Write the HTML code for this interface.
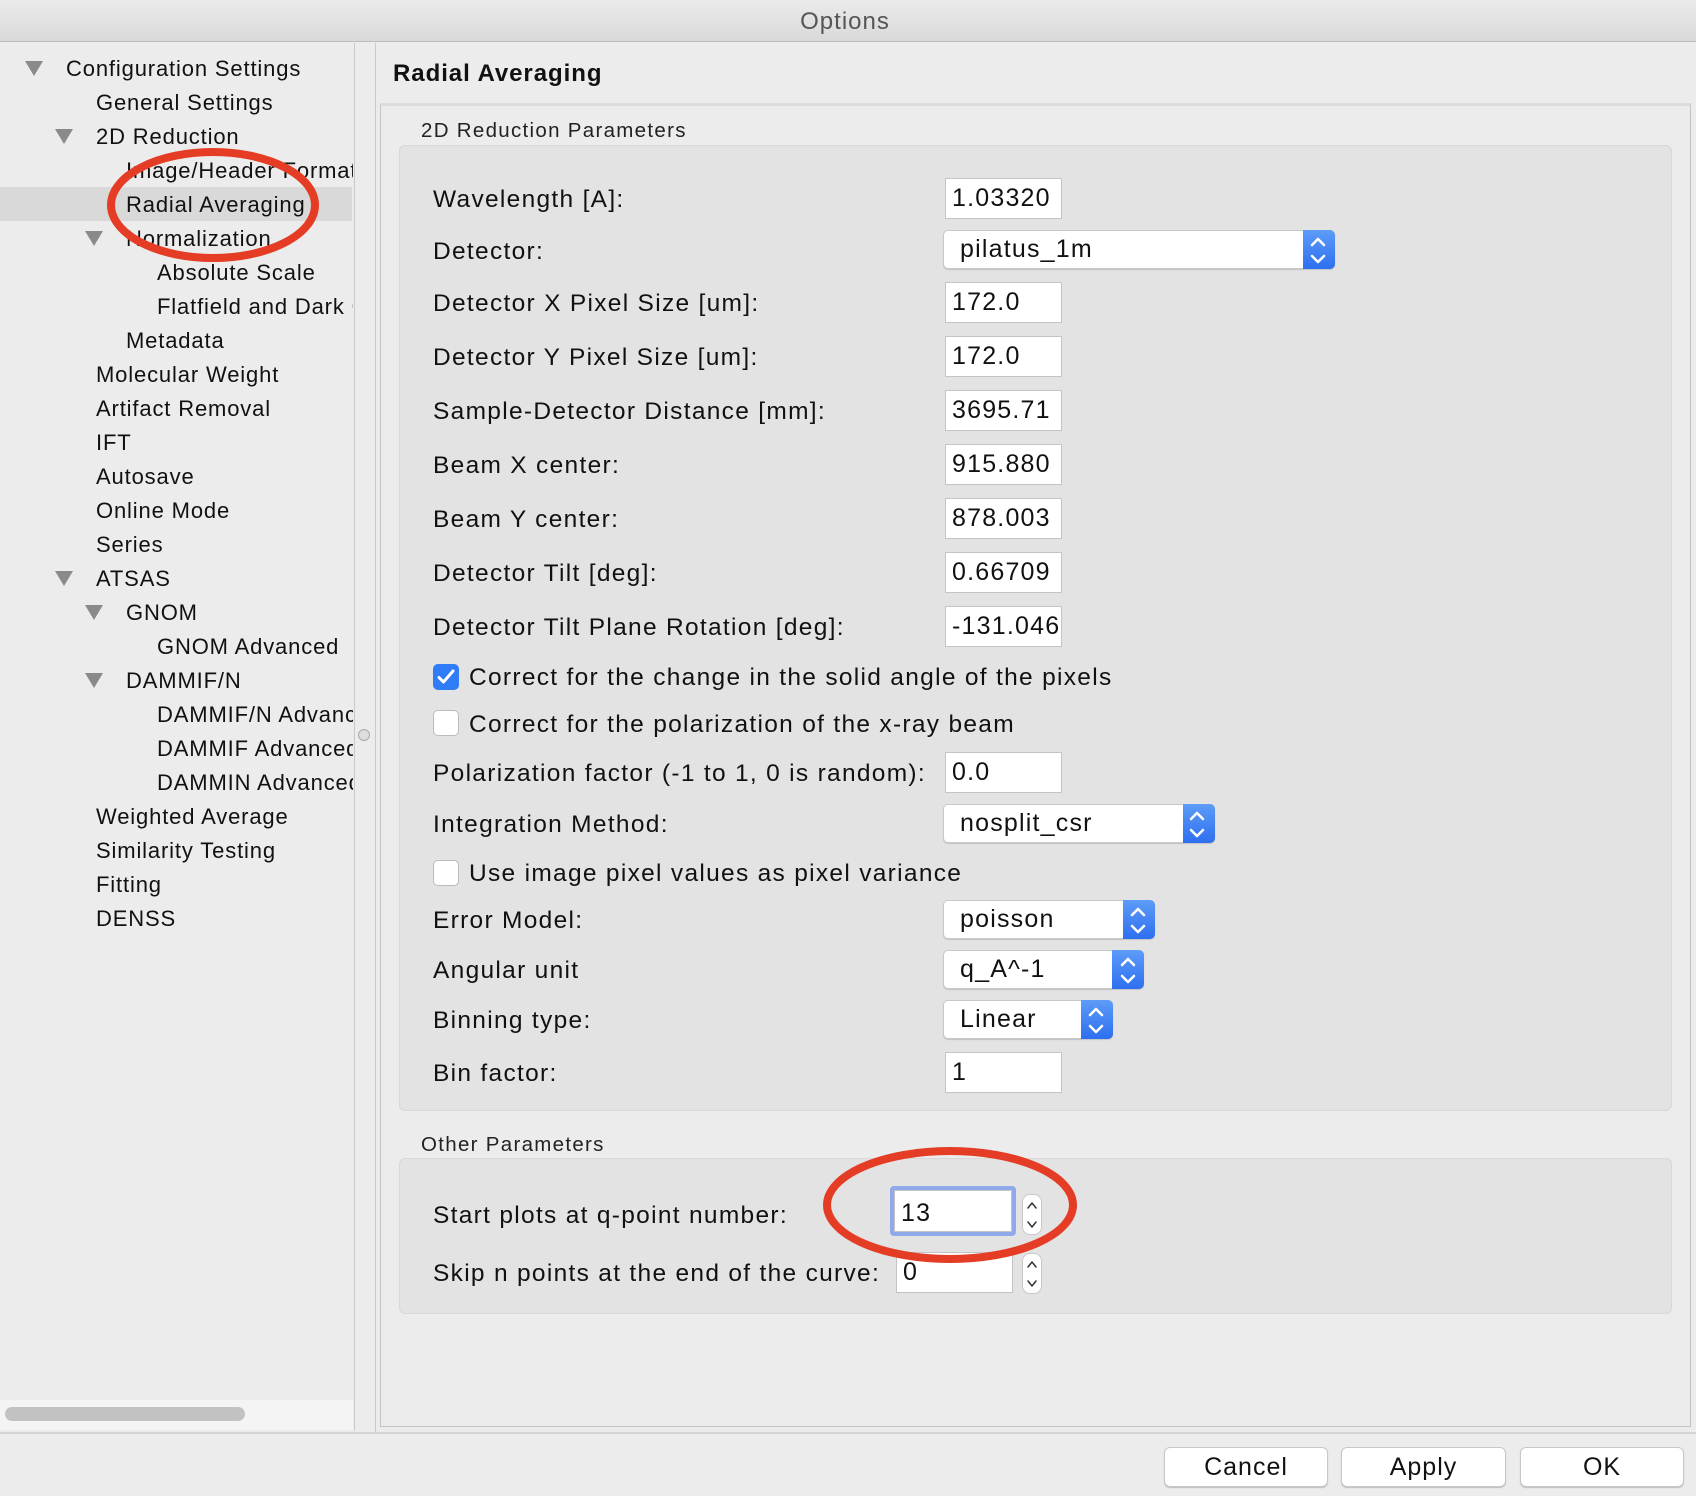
<!DOCTYPE html>
<html><head><meta charset="utf-8"><style>
*{margin:0;padding:0;box-sizing:border-box}
body{width:1696px;height:1496px;background:#ececec;font-family:"Liberation Sans",Arial,sans-serif;color:#111;position:relative;overflow:hidden}
.a{position:absolute;white-space:nowrap}
.t{font-size:22px;line-height:26px;letter-spacing:0.85px}
.tri{position:absolute;width:0;height:0;border-left:9px solid transparent;border-right:9px solid transparent;border-top:15px solid #8a8a8a}
.l{font-size:24.5px;line-height:30px;letter-spacing:1.3px}
.in{position:absolute;background:#fff;border:1px solid #c4c4c4;height:41px;width:117px;font-size:25px;line-height:39px;padding-left:6px;overflow:hidden;letter-spacing:1.2px}
.cb{position:absolute;background:#fff;border:1px solid #c8c8c8;border-radius:5px;height:39px;font-size:25px;line-height:37px;padding-left:16px;box-shadow:0 1px 1px rgba(0,0,0,.15);letter-spacing:1.2px}
.cb .b{position:absolute;right:-1px;top:-1px;bottom:-1px;width:32px;background:linear-gradient(#5d9cf7,#2e6ff0);border-radius:0 5px 5px 0}
.chk{position:absolute;width:26px;height:26px;border:1px solid #bbb;border-radius:5px;background:#fff}
.btn{position:absolute;background:#fff;border:1px solid #c8c8c8;border-radius:6px;height:40px;font-size:25px;line-height:38px;text-align:center;box-shadow:0 1px 1px rgba(0,0,0,.2);letter-spacing:1px}
.spin{position:absolute;width:20px;height:41px;border:1px solid #c8c8c8;border-radius:8px;background:#fff}
</style></head><body>
<div class="a" style="left:0;top:0;width:1696px;height:42px;background:linear-gradient(#ebebeb,#d9d9d9);border-bottom:1px solid #bdbdbd"></div>
<div class="a" style="left:0;top:8px;width:1690px;text-align:center;font-size:24px;color:#555;letter-spacing:1px">Options</div>

<div class="a" style="left:0;top:43px;width:355px;height:1388px;background:#ececec;border-right:1px solid #c9c9c9"></div>
<div class="a" style="left:0;top:187px;width:352px;height:34px;background:#d9d9d9"></div>
<div class="tri" style="left:25px;top:61px"></div>
<div class="tri" style="left:55px;top:129px"></div>
<div class="tri" style="left:85px;top:231px"></div>
<div class="tri" style="left:55px;top:571px"></div>
<div class="tri" style="left:85px;top:605px"></div>
<div class="tri" style="left:85px;top:673px"></div>
<div class="a t" style="left:66px;top:56px">Configuration Settings</div>
<div class="a t" style="left:96px;top:90px">General Settings</div>
<div class="a t" style="left:96px;top:124px">2D Reduction</div>
<div class="a t" style="left:126px;top:158px;width:227px;overflow:hidden">Image/Header Format</div>
<div class="a t" style="left:126px;top:192px">Radial Averaging</div>
<div class="a t" style="left:126px;top:226px">Normalization</div>
<div class="a t" style="left:157px;top:260px">Absolute Scale</div>
<div class="a t" style="left:157px;top:294px;width:196px;overflow:hidden">Flatfield and Dark Correction</div>
<div class="a t" style="left:126px;top:328px">Metadata</div>
<div class="a t" style="left:96px;top:362px">Molecular Weight</div>
<div class="a t" style="left:96px;top:396px">Artifact Removal</div>
<div class="a t" style="left:96px;top:430px">IFT</div>
<div class="a t" style="left:96px;top:464px">Autosave</div>
<div class="a t" style="left:96px;top:498px">Online Mode</div>
<div class="a t" style="left:96px;top:532px">Series</div>
<div class="a t" style="left:96px;top:566px">ATSAS</div>
<div class="a t" style="left:126px;top:600px">GNOM</div>
<div class="a t" style="left:157px;top:634px">GNOM Advanced</div>
<div class="a t" style="left:126px;top:668px">DAMMIF/N</div>
<div class="a t" style="left:157px;top:702px;width:196px;overflow:hidden">DAMMIF/N Advanced</div>
<div class="a t" style="left:157px;top:736px;width:196px;overflow:hidden">DAMMIF Advanced</div>
<div class="a t" style="left:157px;top:770px;width:196px;overflow:hidden">DAMMIN Advanced</div>
<div class="a t" style="left:96px;top:804px">Weighted Average</div>
<div class="a t" style="left:96px;top:838px">Similarity Testing</div>
<div class="a t" style="left:96px;top:872px">Fitting</div>
<div class="a t" style="left:96px;top:906px">DENSS</div>
<div class="a" style="left:0;top:1400px;width:353px;height:30px;background:#f4f4f4"></div>
<div class="a" style="left:5px;top:1407px;width:240px;height:14px;border-radius:7px;background:#c2c2c2"></div>
<div class="a" style="left:358px;top:729px;width:12px;height:12px;border-radius:6px;border:1px solid #aaa;background:#ddd"></div>

<div class="a" style="left:375px;top:43px;width:1321px;height:1390px;border-left:1px solid #c9c9c9"></div>
<div class="a" style="left:393px;top:60px;font-size:24px;font-weight:bold;letter-spacing:0.95px">Radial Averaging</div>
<div class="a" style="left:380px;top:103px;width:1311px;height:1324px;border:1px solid #c4c4c4;border-top:3px solid #dcdcdc;background:#ececec"></div>
<div class="a" style="left:421px;top:119px;font-size:20.5px;color:#222;letter-spacing:1.3px">2D Reduction Parameters</div>
<div class="a" style="left:399px;top:145px;width:1273px;height:966px;background:#e3e3e3;border:1px solid #d8d8d8;border-radius:6px"></div>

<div class="a l" style="left:433px;top:185px">Wavelength [A]:</div>
<div class="in" style="left:945px;top:178px">1.03320</div>
<div class="a l" style="left:433px;top:237px">Detector:</div>
<div class="cb" style="left:943px;top:230px;width:392px">pilatus_1m<div class="b"></div></div>
<div class="a l" style="left:433px;top:289px">Detector X Pixel Size [um]:</div>
<div class="in" style="left:945px;top:282px">172.0</div>
<div class="a l" style="left:433px;top:343px">Detector Y Pixel Size [um]:</div>
<div class="in" style="left:945px;top:336px">172.0</div>
<div class="a l" style="left:433px;top:397px">Sample-Detector Distance [mm]:</div>
<div class="in" style="left:945px;top:390px">3695.71</div>
<div class="a l" style="left:433px;top:451px">Beam X center:</div>
<div class="in" style="left:945px;top:444px">915.880</div>
<div class="a l" style="left:433px;top:505px">Beam Y center:</div>
<div class="in" style="left:945px;top:498px">878.003</div>
<div class="a l" style="left:433px;top:559px">Detector Tilt [deg]:</div>
<div class="in" style="left:945px;top:552px">0.66709</div>
<div class="a l" style="left:433px;top:613px">Detector Tilt Plane Rotation [deg]:</div>
<div class="in" style="left:945px;top:606px">-131.0461</div>
<div class="chk" style="left:433px;top:664px;background:#2f7cf6;border-color:#2f7cf6"><svg width="24" height="24" viewBox="0 0 24 24"><path d="M5 12.5l4.5 4.5L19 6" fill="none" stroke="#fff" stroke-width="3" stroke-linecap="round" stroke-linejoin="round"/></svg></div>
<div class="a l" style="left:469px;top:663px">Correct for the change in the solid angle of the pixels</div>
<div class="chk" style="left:433px;top:710px"></div>
<div class="a l" style="left:469px;top:710px">Correct for the polarization of the x-ray beam</div>
<div class="a l" style="left:433px;top:759px">Polarization factor (-1 to 1, 0 is random):</div>
<div class="in" style="left:945px;top:752px">0.0</div>
<div class="a l" style="left:433px;top:810px">Integration Method:</div>
<div class="cb" style="left:943px;top:804px;width:272px">nosplit_csr<div class="b"></div></div>
<div class="chk" style="left:433px;top:860px"></div>
<div class="a l" style="left:469px;top:859px">Use image pixel values as pixel variance</div>
<div class="a l" style="left:433px;top:906px">Error Model:</div>
<div class="cb" style="left:943px;top:900px;width:212px">poisson<div class="b"></div></div>
<div class="a l" style="left:433px;top:956px">Angular unit</div>
<div class="cb" style="left:943px;top:950px;width:201px">q_A^-1<div class="b"></div></div>
<div class="a l" style="left:433px;top:1006px">Binning type:</div>
<div class="cb" style="left:943px;top:1000px;width:170px">Linear<div class="b"></div></div>
<div class="a l" style="left:433px;top:1059px">Bin factor:</div>
<div class="in" style="left:945px;top:1052px">1</div>

<div class="a" style="left:421px;top:1133px;font-size:20.5px;color:#222;letter-spacing:1.3px">Other Parameters</div>
<div class="a" style="left:399px;top:1158px;width:1273px;height:156px;background:#e3e3e3;border:1px solid #d8d8d8;border-radius:6px"></div>
<div class="a l" style="left:433px;top:1201px">Start plots at q-point number:</div>
<div class="a" style="left:890px;top:1186px;width:126px;height:50px;background:#8fa9ea;border-radius:4px"></div>
<div class="in" style="left:894px;top:1190px;width:118px;height:42px;line-height:44px">13</div>
<div class="spin" style="left:1022px;top:1194px"></div>
<div class="a l" style="left:433px;top:1259px">Skip n points at the end of the curve:</div>
<div class="in" style="left:896px;top:1252px;width:117px">0</div>
<div class="spin" style="left:1022px;top:1253px"></div>

<div class="a" style="left:0;top:1432px;width:1696px;height:2px;background:#d4d4d4"></div>
<div class="btn" style="left:1164px;top:1447px;width:164px">Cancel</div>
<div class="btn" style="left:1341px;top:1447px;width:165px">Apply</div>
<div class="btn" style="left:1520px;top:1447px;width:164px">OK</div>

<svg class="a" style="left:0;top:0" width="1696" height="1496">
<g fill="none" stroke="#e53c25" stroke-width="8">
<ellipse cx="213" cy="205" rx="102" ry="53"/>
<ellipse cx="950" cy="1205" rx="123" ry="54"/>
</g>
<g fill="none" stroke="#fff" stroke-width="2.5" stroke-linecap="round" stroke-linejoin="round">
<path d="M1312 245l6-6 6 6M1312 256l6 6 6-6"/>
<path d="M1191 819l6-6 6 6M1191 830l6 6 6-6"/>
<path d="M1132 915l6-6 6 6M1132 926l6 6 6-6"/>
<path d="M1122 965l6-6 6 6M1122 976l6 6 6-6"/>
<path d="M1090 1015l6-6 6 6M1090 1026l6 6 6-6"/>
</g>
<g fill="none" stroke="#333" stroke-width="1.5" stroke-linecap="round" stroke-linejoin="round">
<path d="M1028 1208l4-5 4 5M1028 1222l4 5 4-5"/>
<path d="M1028 1267l4-5 4 5M1028 1281l4 5 4-5"/>
</g>
</svg>
</body></html>
